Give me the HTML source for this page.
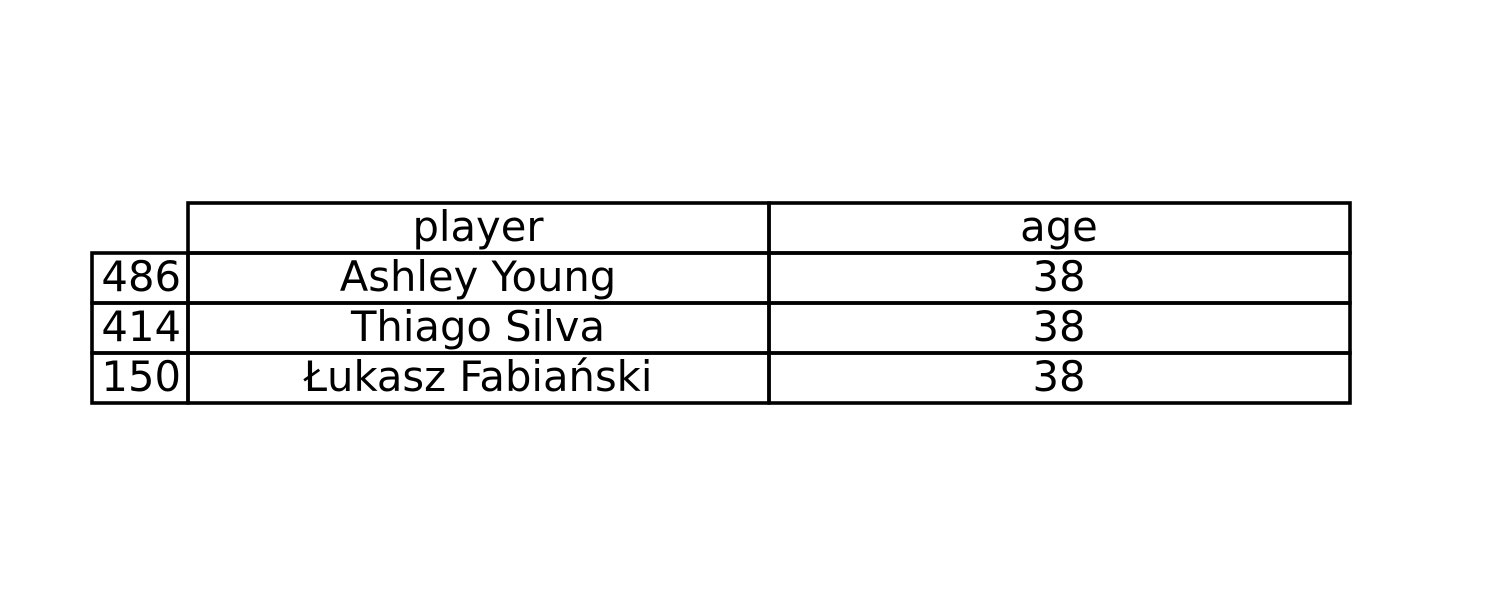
<!DOCTYPE html>
<html><head><style>html,body{margin:0;padding:0;background:#fff;}</style></head>
<body>
<svg width="1500" height="600" xmlns="http://www.w3.org/2000/svg" style="display:block">
<rect width="1500" height="600" fill="#fff"/>
<g stroke="#000" stroke-width="3.6" fill="none">
<rect x="188" y="203" width="581" height="50"/>
<rect x="769" y="203" width="581" height="50"/>
<rect x="92" y="253" width="96" height="50"/>
<rect x="188" y="253" width="581" height="50"/>
<rect x="769" y="253" width="581" height="50"/>
<rect x="92" y="303" width="96" height="50"/>
<rect x="188" y="303" width="581" height="50"/>
<rect x="769" y="303" width="581" height="50"/>
<rect x="92" y="353" width="96" height="50"/>
<rect x="188" y="353" width="581" height="50"/>
<rect x="769" y="353" width="581" height="50"/>
</g>
<g font-family="DejaVu Sans, sans-serif" font-size="41.7" fill="#000">
<text x="478" y="241" text-anchor="middle">player</text>
<text x="1059" y="241" text-anchor="middle">age</text>
<text x="181" y="291" text-anchor="end">486</text>
<text x="478" y="291" text-anchor="middle">Ashley Young</text>
<text x="1059" y="291" text-anchor="middle">38</text>
<text x="181" y="341" text-anchor="end">414</text>
<text x="478" y="341" text-anchor="middle">Thiago Silva</text>
<text x="1059" y="341" text-anchor="middle">38</text>
<text x="181" y="391" text-anchor="end">150</text>
<text x="478" y="391" text-anchor="middle">Łukasz Fabiański</text>
<text x="1059" y="391" text-anchor="middle">38</text>
</g>
</svg>
</body></html>
